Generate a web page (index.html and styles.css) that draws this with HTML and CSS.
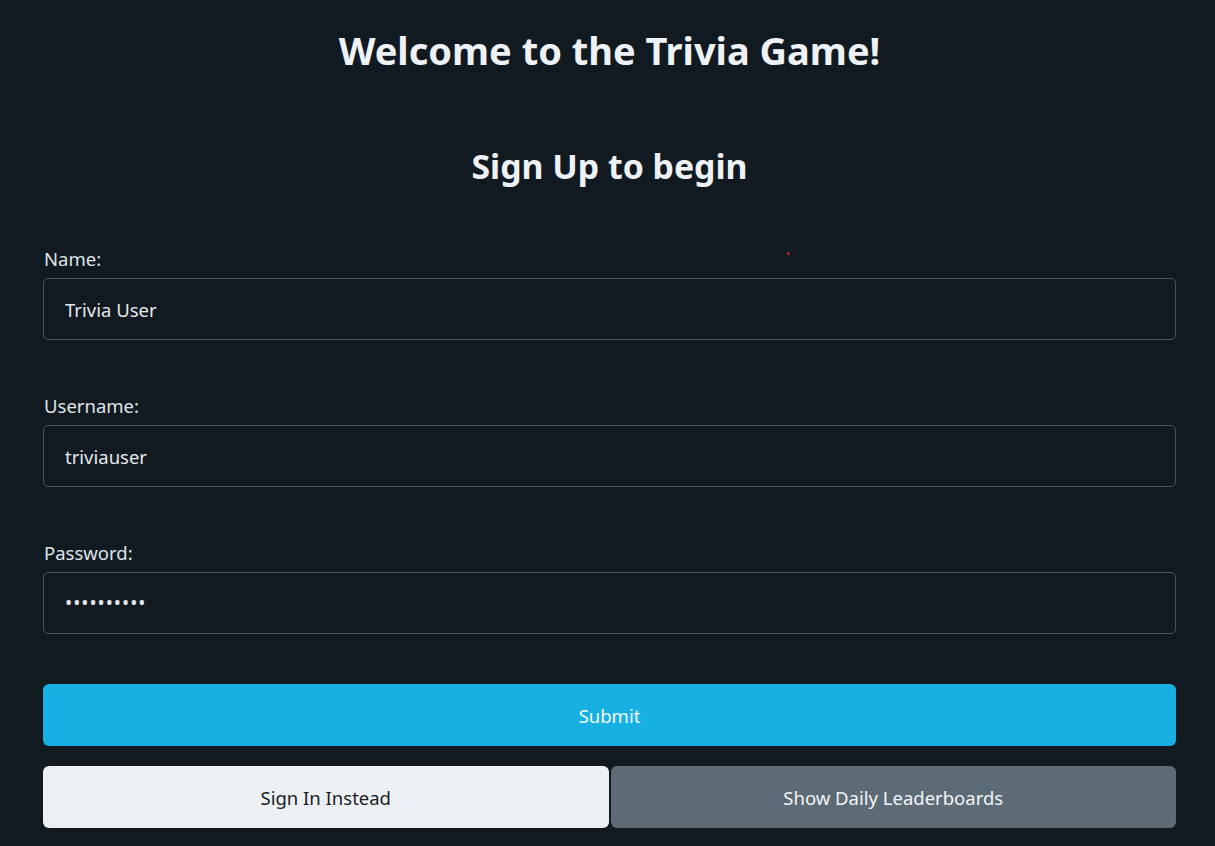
FILE: index.html
```html
<!DOCTYPE html>
<html lang="en">
<head>
<meta charset="utf-8">
<title>Trivia Game</title>
<link rel="stylesheet" href="styles.css">
</head>
<body>
<main class="page">
  <h1 class="title">Welcome to the Trivia Game!</h1>
  <h2 class="subtitle">Sign Up to begin</h2>
  <form class="form">
    <div class="field">
      <label class="label" for="name">Name:</label>
      <input class="input" id="name" type="text" value="Trivia User">
    </div>
    <div class="field">
      <label class="label" for="username">Username:</label>
      <input class="input" id="username" type="text" value="triviauser">
    </div>
    <div class="field field-last">
      <label class="label" for="password">Password:</label>
      <input class="input input-password" id="password" type="password" value="triviapass">
    </div>
    <button class="btn btn-submit" type="button">Submit</button>
    <div class="btn-row">
      <button class="btn btn-light" type="button">Sign In Instead</button>
      <button class="btn btn-gray" type="button">Show Daily Leaderboards</button>
    </div>
  </form>
  <span class="dot"></span>
</main>
</body>
</html>
```
FILE: styles.css
```css
* { box-sizing: border-box; }
html, body {
  margin: 0;
  background: #121a21;
  color: #eef2f6;
  font-family: "Noto Sans", "Open Sans", sans-serif;
}
.page {
  position: relative;
  padding: 0 39px 0 43px;
  min-height: 846px;
}
.title {
  margin: 0;
  padding-top: 25px;
  text-align: center;
  font-size: 38px;
  font-weight: 700;
  line-height: 50px;
}
.subtitle {
  margin: 0;
  padding-top: 66px;
  text-align: center;
  font-size: 33.8px;
  font-weight: 700;
  line-height: 50px;
}
.form {
  display: flex;
  flex-direction: column;
  padding-top: 54px;
}
.field {
  display: flex;
  flex-direction: column;
  margin-bottom: 52px;
}
.field-last {
  margin-bottom: 50px;
}
.label {
  font-size: 18.5px;
  line-height: 28px;
  margin-bottom: 5px;
  padding-left: 1px;
  color: #dfe4e9;
}
.input {
  height: 62px;
  background: #121a21;
  border: 1px solid #4a535b;
  border-radius: 5px;
  color: #e4e8ec;
  font-family: inherit;
  font-size: 18.5px;
  padding: 0 21px;
  outline: none;
}
.input-password {
  letter-spacing: 1px;
  font-size: 19px;
}
.btn {
  height: 62px;
  border: none;
  border-radius: 6px;
  font-family: inherit;
  font-size: 18.5px;
  cursor: pointer;
}
.btn-submit {
  background: #17b0e2;
  color: #f4f8fb;
}
.btn-row {
  display: flex;
  gap: 2px;
  margin-top: 20px;
}
.btn-row .btn { flex: 1; }
.btn-light {
  background: #edf0f3;
  color: #1a1f24;
}
.btn-gray {
  background: #5c6b75;
  color: #f2f5f7;
}
.dot {
  position: absolute;
  left: 787px;
  top: 252px;
  width: 3px;
  height: 3px;
  border-radius: 50%;
  background: #c0202c;
}
```
